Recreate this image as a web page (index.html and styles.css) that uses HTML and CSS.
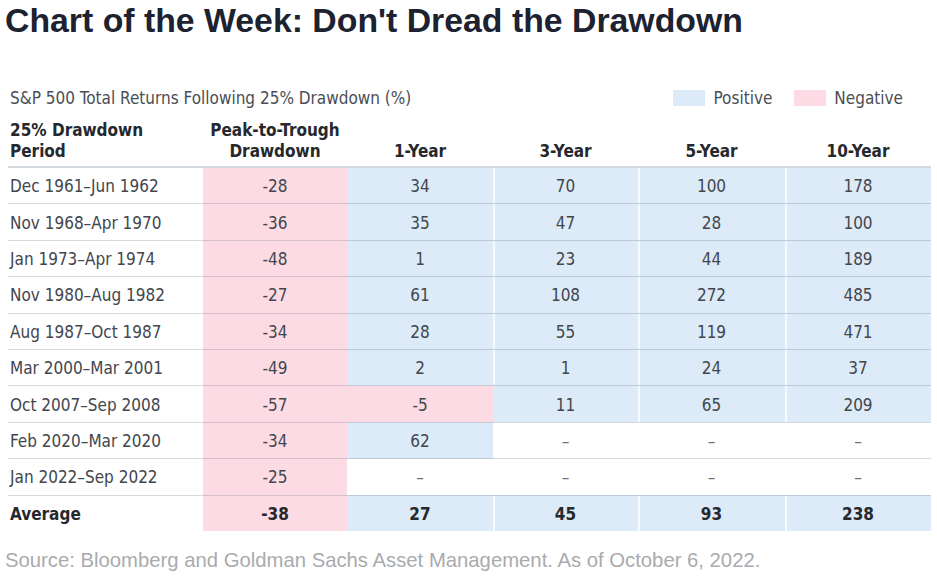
FILE: index.html
```html
<!DOCTYPE html>
<html>
<head>
<meta charset="utf-8">
<link rel="stylesheet" href="styles.css">
</head>
<body>
<h1 class="title">Chart of the Week: Don't Dread the Drawdown</h1>
<div class="chart">
  <div class="chart-top">
    <div class="subtitle">S&amp;P 500 Total Returns Following 25% Drawdown (%)</div>
    <div class="legend">
      <span class="swatch swatch-pos"></span><span class="legend-label">Positive</span>
      <span class="swatch swatch-neg"></span><span class="legend-label">Negative</span>
    </div>
  </div>
  <table class="returns">
    <colgroup>
      <col class="c-period"><col class="c-peak"><col class="c-y1"><col class="c-y3"><col class="c-y5"><col class="c-y10">
    </colgroup>
    <thead>
      <tr>
        <th class="left">25% Drawdown<br>Period</th>
        <th>Peak-to-Trough<br>Drawdown</th>
        <th>1-Year</th>
        <th>3-Year</th>
        <th>5-Year</th>
        <th>10-Year</th>
      </tr>
    </thead>
    <tbody>
      <tr><td class="left">Dec 1961–Jun 1962</td><td class="neg">-28</td><td class="pos">34</td><td class="pos sep">70</td><td class="pos sep">100</td><td class="pos sep">178</td></tr>
      <tr><td class="left">Nov 1968–Apr 1970</td><td class="neg">-36</td><td class="pos">35</td><td class="pos sep">47</td><td class="pos sep">28</td><td class="pos sep">100</td></tr>
      <tr><td class="left">Jan 1973–Apr 1974</td><td class="neg">-48</td><td class="pos">1</td><td class="pos sep">23</td><td class="pos sep">44</td><td class="pos sep">189</td></tr>
      <tr><td class="left">Nov 1980–Aug 1982</td><td class="neg">-27</td><td class="pos">61</td><td class="pos sep">108</td><td class="pos sep">272</td><td class="pos sep">485</td></tr>
      <tr><td class="left">Aug 1987–Oct 1987</td><td class="neg">-34</td><td class="pos">28</td><td class="pos sep">55</td><td class="pos sep">119</td><td class="pos sep">471</td></tr>
      <tr><td class="left">Mar 2000–Mar 2001</td><td class="neg">-49</td><td class="pos">2</td><td class="pos sep">1</td><td class="pos sep">24</td><td class="pos sep">37</td></tr>
      <tr><td class="left">Oct 2007–Sep 2008</td><td class="neg">-57</td><td class="neg">-5</td><td class="pos">11</td><td class="pos sep">65</td><td class="pos sep">209</td></tr>
      <tr><td class="left">Feb 2020–Mar 2020</td><td class="neg">-34</td><td class="pos">62</td><td class="dash">–</td><td class="dash">–</td><td class="dash">–</td></tr>
      <tr><td class="left">Jan 2022–Sep 2022</td><td class="neg">-25</td><td class="dash">–</td><td class="dash">–</td><td class="dash">–</td><td class="dash">–</td></tr>
      <tr class="avg"><td class="left">Average</td><td class="neg">-38</td><td class="pos">27</td><td class="pos sep">45</td><td class="pos sep">93</td><td class="pos sep">238</td></tr>
    </tbody>
  </table>
</div>
<p class="source">Source: Bloomberg and Goldman Sachs Asset Management. As of October 6, 2022.</p>
</body>
</html>
```
FILE: styles.css
```css
html, body {
  margin: 0;
  padding: 0;
  background: #ffffff;
}
body {
  width: 937px;
  height: 580px;
  overflow: hidden;
  font-family: "DejaVu Sans Condensed", "DejaVu Sans", sans-serif;
  font-stretch: condensed;
}
.title {
  margin: 0;
  padding: 1px 0 0 5px;
  font-family: "Liberation Sans", Arial, sans-serif;
  font-stretch: normal;
  font-weight: bold;
  font-size: 33.8px;
  line-height: 38px;
  color: #1c2230;
}
.chart {
  margin: 0 0 0 8px;
  width: 923px;
}
.chart-top {
  display: flex;
  justify-content: space-between;
  align-items: center;
  margin-top: 47px;
  height: 24px;
  padding-left: 2px;
}
.subtitle {
  font-size: 17px;
  color: #4a4e55;
}
.legend {
  display: flex;
  align-items: center;
  padding-right: 28px;
}
.swatch {
  width: 32px;
  height: 16px;
  margin-right: 8px;
}
.swatch-pos { background: #dcebf7; }
.swatch-neg { background: #fcdbe4; margin-left: 22px; }
.legend-label {
  font-size: 17px;
  color: #4a4e55;
}
.returns {
  border-collapse: collapse;
  table-layout: fixed;
  width: 923px;
  margin-top: 0;
}
.c-period { width: 195px; }
.c-peak { width: 144px; }
.c-y1 { width: 146px; }
.c-y3 { width: 145px; }
.c-y5 { width: 147px; }
.c-y10 { width: 146px; }
.returns th {
  font-weight: bold;
  font-size: 17px;
  line-height: 21px;
  color: #25282d;
  text-align: center;
  vertical-align: bottom;
  padding: 0 0 4px 0;
  height: 52px;
  border-bottom: 2px solid #d3d8de;
}
.returns th.left, .returns td.left {
  text-align: left;
  padding-left: 2px;
}
.returns td {
  height: 34.4px;
  padding: 1px 0 0 0;
  font-size: 17px;
  color: #42464d;
  text-align: center;
  vertical-align: middle;
  border-top: 1.5px solid rgba(110, 118, 130, 0.28);
}
.returns tbody tr:first-child td { border-top: none; }
.returns td.pos { background: #dcebf7; }
.returns td.neg { background: #fcdbe4; }
.returns td.pos.sep { box-shadow: inset 2px 0 0 rgba(255, 255, 255, 0.75); }
.returns td.dash { color: #6a6e75; }
.returns tr.avg td {
  font-weight: bold;
  color: #25282d;
}
.source {
  margin: 17px 0 0 5px;
  font-family: "Liberation Sans", Arial, sans-serif;
  font-stretch: normal;
  font-size: 20.3px;
  line-height: 24px;
  color: #a9abae;
}
```
